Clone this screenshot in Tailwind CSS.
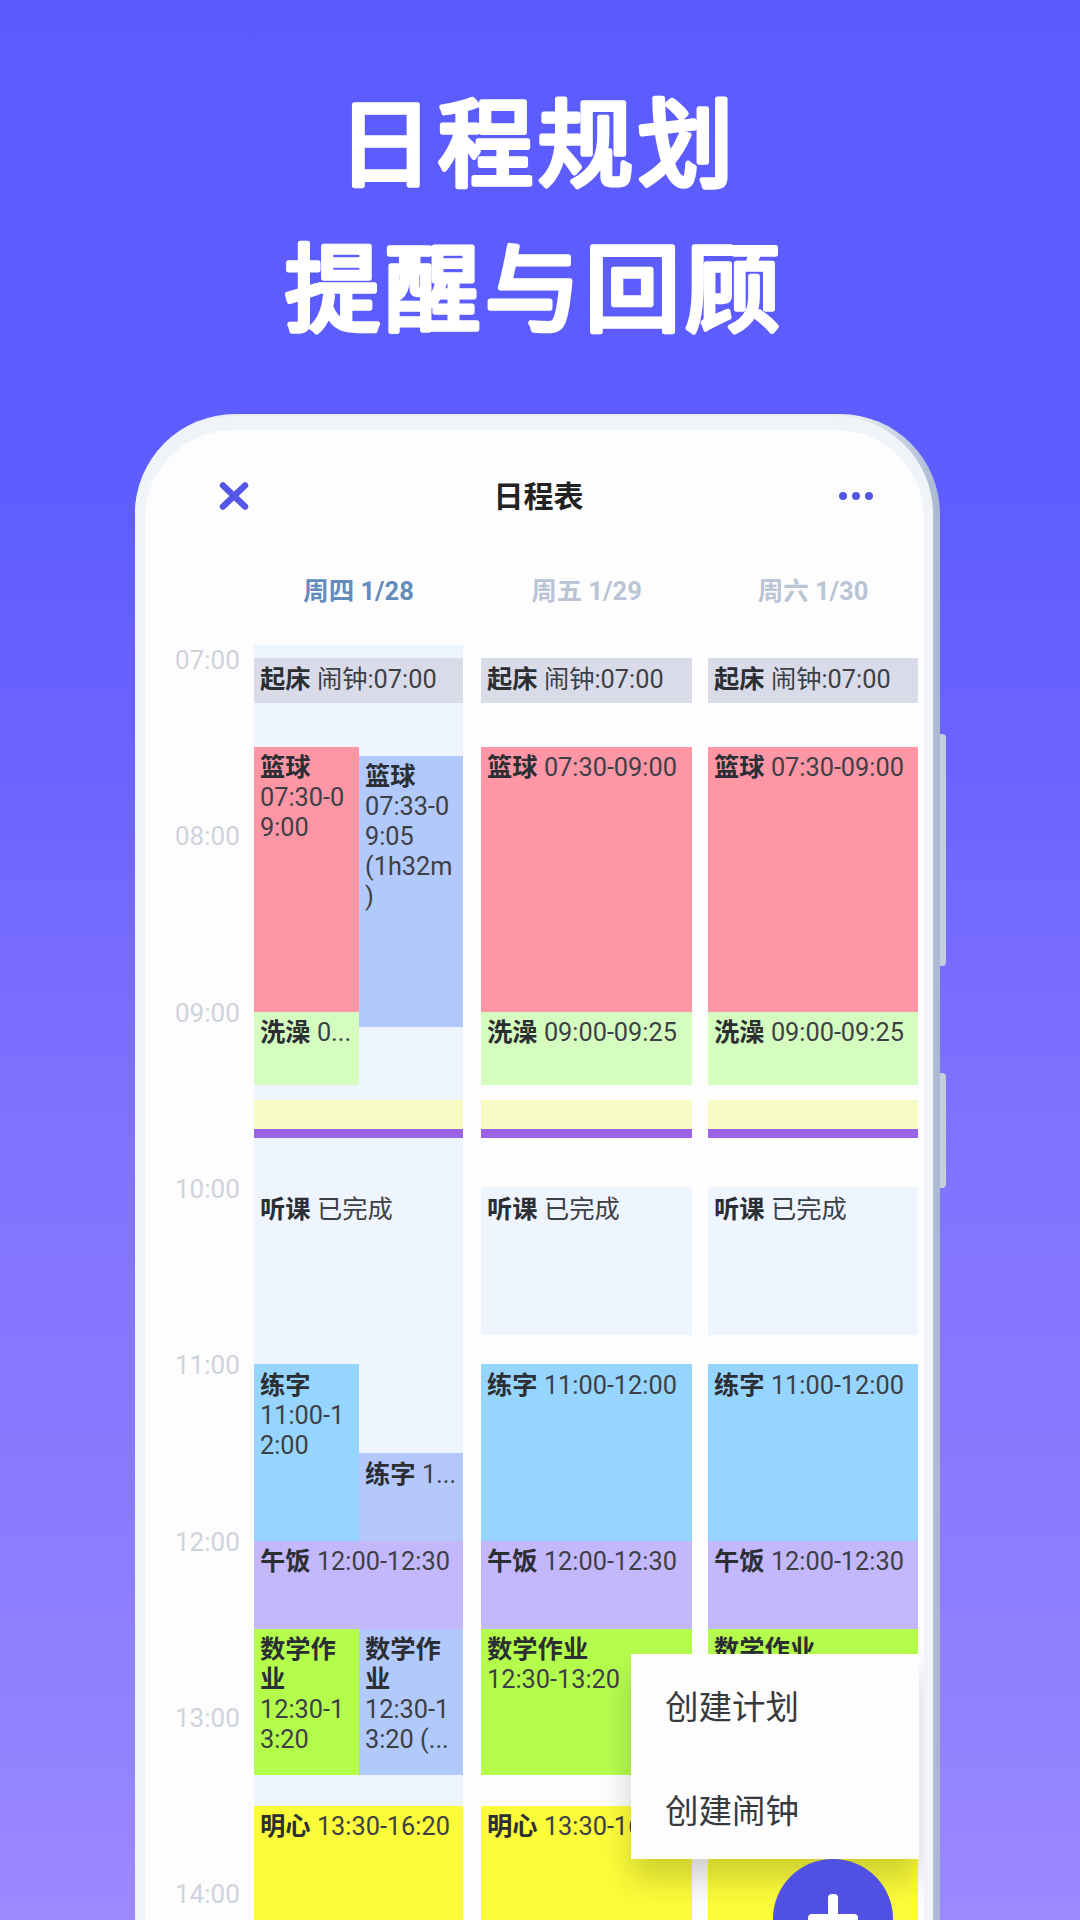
<!DOCTYPE html>
<html lang="zh">
<head>
    <meta charset="UTF-8">
    <title>日程规划</title>
    <script src="https://cdn.jsdelivr.net/npm/@tailwindcss/browser@4"></script>
</head>
<body class="[font-family:Roboto,'Noto_Sans_CJK_SC',sans-serif]">
<div class="relative w-[1080px] h-[1920px] overflow-hidden bg-[linear-gradient(180deg,#5b5cff_0%,#5e5dff_25%,#6c63ff_40%,#8072ff_58%,#8b7aff_78%,#9a89ff_100%)]">

    <!-- Heading -->
    <svg class="block" width="1080" height="414" viewBox="0 0 1080 414" fill="#fff" stroke="#fff" stroke-width="5.5" stroke-linejoin="round" stroke-linecap="round" text-anchor="middle" font-family="'Noto Sans CJK SC', sans-serif" font-weight="400" font-size="95" letter-spacing="5">
        <text x="538" y="179">日程规划</text>
        <text x="535" y="324">提醒与回顾</text>
    </svg>

    <!-- Phone -->
    <div class="relative ml-[135px] w-[805px] h-[1506px] rounded-t-[100px] bg-gradient-to-r from-[#e8edf3] from-[90%] to-[#a9b8d1] pr-[7px] pt-[2px]">
        <div class="h-full rounded-t-[98px] bg-[#f0f4f9] pr-[9px] pl-[10px] pt-[14px]">
            <div class="relative h-full rounded-t-[88px] bg-[#fdfdfe] overflow-hidden">

                <!-- Top bar -->
                <div class="h-[132px] flex items-center justify-between pl-[74px] pr-[51px]">
                    <svg class="w-[30px] h-[28px]" viewBox="0 0 30 28" fill="none" stroke="#5457e6" stroke-width="6.5" stroke-linecap="round"><path d="M4 3.5L26 24.5M26 3.5L4 24.5"/></svg>
                    <div class="text-[30px] font-bold text-[#222] mr-[11px]">日程表</div>
                    <div class="flex gap-[5px]">
                        <span class="w-[8px] h-[8px] rounded-full bg-[#5457e6]"></span>
                        <span class="w-[8px] h-[8px] rounded-full bg-[#5457e6]"></span>
                        <span class="w-[8px] h-[8px] rounded-full bg-[#5457e6]"></span>
                    </div>
                </div>

                <!-- Day headers -->
                <div class="flex h-[83px] pl-[109px] pt-[14px] text-[25.5px] font-bold leading-[30px] text-[#b9c5d5]">
                    <div class="w-[209px] mr-[18px] text-center text-[#648cbb]">周四 1/28</div>
                    <div class="w-[211px] mr-[16px] text-center">周五 1/29</div>
                    <div class="w-[210px] text-center">周六 1/30</div>
                </div>

                <!-- Schedule -->
                <div class="flex pl-[30px] text-[25.3px] leading-[30px] text-[#3d4045]">
                    <div class="w-[79px] shrink-0 text-[26px] text-[#ced3dc]">
                        <div class="h-[176.33px]">07:00</div>
                        <div class="h-[176.33px]">08:00</div>
                        <div class="h-[176.33px]">09:00</div>
                        <div class="h-[176.33px]">10:00</div>
                        <div class="h-[176.33px]">11:00</div>
                        <div class="h-[176.33px]">12:00</div>
                        <div class="h-[176.33px]">13:00</div>
                        <div class="h-[176.33px]">14:00</div>
                    </div>

                    <!-- Thursday -->
                    <div class="w-[209px] mr-[18px] shrink-0 pt-[13px] bg-[#eef5fe] h-[1161px]">
                        <div class="h-[45px] mb-[44px] bg-[#d9dbe9] px-[6px] pt-[7px]"><b class="text-[#2b2e32]">起床</b> 闹钟:07:00</div>
                        <div class="flex h-[338px] mb-[15px]">
                            <div class="w-[105px]">
                                <div class="h-[265px] bg-[#ff96a6] px-[6px] pt-[6px]"><b class="text-[#2b2e32]">篮球</b><br>07:30-0<br>9:00</div>
                                <div class="h-[73px] bg-[#d6fdc0] px-[6px] pt-[6px]"><b class="text-[#2b2e32]">洗澡</b> 0...</div>
                            </div>
                            <div class="w-[104px] mt-[9px] h-[271px] bg-[#b1c9fb] px-[6px] pt-[6px]"><b class="text-[#2b2e32]">篮球</b><br>07:33-0<br>9:05<br>(1h32m<br>)</div>
                        </div>
                        <div class="h-[29px] bg-[#f9fbc4]"></div>
                        <div class="h-[9px] bg-[#9b63e6]"></div>
                        <div class="h-[226px] pt-[57px] px-[6px]"><b class="text-[#2b2e32]">听课</b> 已完成</div>
                        <div class="flex h-[177px]">
                            <div class="w-[105px] bg-[#96d5fd] px-[6px] pt-[7px]"><b class="text-[#2b2e32]">练字</b><br>11:00-1<br>2:00</div>
                            <div class="w-[104px] mt-[89px] bg-[#b4c8fb] px-[6px] pt-[7px]"><b class="text-[#2b2e32]">练字</b> 1...</div>
                        </div>
                        <div class="h-[88px] bg-[#c4b8fc] px-[6px] pt-[6px]"><b class="text-[#2b2e32]">午饭</b> 12:00-12:30</div>
                        <div class="flex h-[146px]">
                            <div class="w-[105px] bg-[#b5fd4d] px-[6px] pt-[6px]"><b class="text-[#2b2e32]">数学作<br>业</b><br>12:30-1<br>3:20</div>
                            <div class="w-[104px] bg-[#b1c9fb] px-[6px] pt-[6px]"><b class="text-[#2b2e32]">数学作<br>业</b><br>12:30-1<br>3:20 (...</div>
                        </div>
                        <div class="h-[31px]"></div>
                        <div class="h-[200px] bg-[#fcfc3a] px-[6px] pt-[6px]"><b class="text-[#2b2e32]">明心</b> 13:30-16:20</div>
                    </div>

                    <!-- Friday -->
                    <div class="w-[211px] mr-[16px] shrink-0 pt-[13px]">
                        <div class="h-[45px] mb-[44px] bg-[#d9dbe9] px-[6px] pt-[7px]"><b class="text-[#2b2e32]">起床</b> 闹钟:07:00</div>
                        <div class="h-[265px] bg-[#ff96a6] px-[6px] pt-[6px]"><b class="text-[#2b2e32]">篮球</b> 07:30-09:00</div>
                        <div class="h-[73px] mb-[15px] bg-[#d6fdc0] px-[6px] pt-[6px]"><b class="text-[#2b2e32]">洗澡</b> 09:00-09:25</div>
                        <div class="h-[29px] bg-[#f9fbc4]"></div>
                        <div class="h-[9px] mb-[49px] bg-[#9b63e6]"></div>
                        <div class="h-[148px] mb-[29px] bg-[#eef5fe] px-[6px] pt-[8px]"><b class="text-[#2b2e32]">听课</b> 已完成</div>
                        <div class="h-[177px] bg-[#96d5fd] px-[6px] pt-[7px]"><b class="text-[#2b2e32]">练字</b> 11:00-12:00</div>
                        <div class="h-[88px] bg-[#c4b8fc] px-[6px] pt-[6px]"><b class="text-[#2b2e32]">午饭</b> 12:00-12:30</div>
                        <div class="h-[146px] mb-[31px] bg-[#b5fd4d] px-[6px] pt-[6px]"><b class="text-[#2b2e32]">数学作业</b><br>12:30-13:20</div>
                        <div class="h-[200px] bg-[#fcfc3a] px-[6px] pt-[6px]"><b class="text-[#2b2e32]">明心</b> 13:30-16:20</div>
                    </div>

                    <!-- Saturday -->
                    <div class="w-[210px] shrink-0 pt-[13px]">
                        <div class="h-[45px] mb-[44px] bg-[#d9dbe9] px-[6px] pt-[7px]"><b class="text-[#2b2e32]">起床</b> 闹钟:07:00</div>
                        <div class="h-[265px] bg-[#ff96a6] px-[6px] pt-[6px]"><b class="text-[#2b2e32]">篮球</b> 07:30-09:00</div>
                        <div class="h-[73px] mb-[15px] bg-[#d6fdc0] px-[6px] pt-[6px]"><b class="text-[#2b2e32]">洗澡</b> 09:00-09:25</div>
                        <div class="h-[29px] bg-[#f9fbc4]"></div>
                        <div class="h-[9px] mb-[49px] bg-[#9b63e6]"></div>
                        <div class="h-[148px] mb-[29px] bg-[#eef5fe] px-[6px] pt-[8px]"><b class="text-[#2b2e32]">听课</b> 已完成</div>
                        <div class="h-[177px] bg-[#96d5fd] px-[6px] pt-[7px]"><b class="text-[#2b2e32]">练字</b> 11:00-12:00</div>
                        <div class="h-[88px] bg-[#c4b8fc] px-[6px] pt-[6px]"><b class="text-[#2b2e32]">午饭</b> 12:00-12:30</div>
                        <div class="h-[146px] mb-[31px] bg-[#b5fd4d] px-[6px] pt-[6px]"><b class="text-[#2b2e32]">数学作业</b><br>12:30-13:20</div>
                        <div class="h-[200px] bg-[#fcfc3a]"></div>
                    </div>
                </div>

                <!-- Popup menu -->
                <div class="absolute left-[486px] top-[1224px] w-[288px] h-[205px] bg-[#fdfdfe] shadow-[0_20px_30px_rgba(0,0,0,0.18)] pl-[34px] pt-[2px] text-[33.5px] leading-[104px] text-[#37393d]">
                    <div class="h-[104px]">创建计划</div>
                    <div class="h-[104px]">创建闹钟</div>
                </div>

                <!-- Add button -->
                <div class="absolute left-[628px] top-[1429px] w-[120px] h-[120px] rounded-full bg-[#5050e2] flex items-center justify-center">
                    <svg class="w-[50px] h-[50px]" viewBox="0 0 50 50" fill="#fff"><rect x="20" y="0" width="10" height="50" rx="4"/><rect x="0" y="20" width="50" height="10" rx="4"/></svg>
                </div>
            </div>
        </div>

        <!-- Side buttons -->
        <div class="absolute right-[-6px] top-[320px] w-[6px] h-[232px] rounded-r-[4px] bg-[#c4cfe0]"></div>
        <div class="absolute right-[-6px] top-[659px] w-[6px] h-[115px] rounded-r-[4px] bg-[#c4cfe0]"></div>
    </div>
</div>
</body>
</html>
